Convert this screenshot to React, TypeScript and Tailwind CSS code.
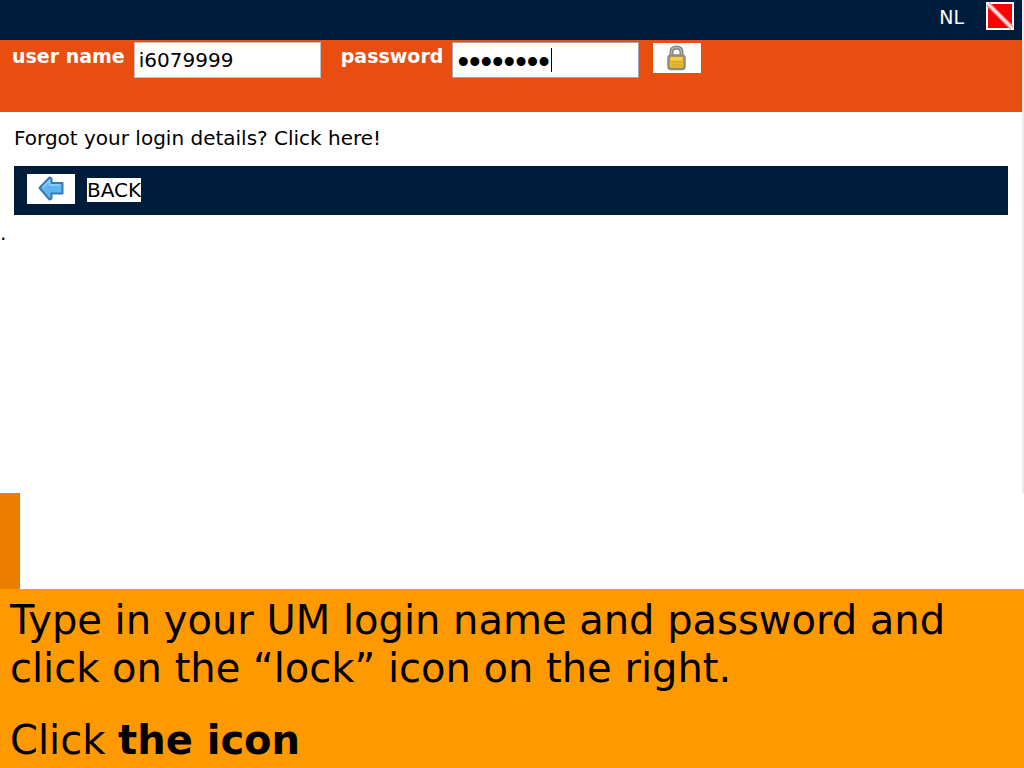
import { useState } from 'react';

function LockIcon() {
  return (
    <svg viewBox="0 0 24 26" className="h-[26px] w-6" aria-hidden="true">
      <path d="M6.500 12V7C6.500 4 8.500 2.500 11.500 2.500s5 1.500 5 4.500V12" fill="none" stroke="#7d8184" strokeWidth="4" />
      <path d="M6.500 12V7C6.500 4 8.500 2.500 11.500 2.500s5 1.500 5 4.500V12" fill="none" stroke="#adb2b5" strokeWidth="1.500" />
      <rect x="3.500" y="10.500" width="16" height="13.500" rx="2.500" fill="#e8bd2b" stroke="#908c82" strokeWidth="2.500" />
      <rect x="6" y="12.500" width="11" height="3" fill="#f5d24d" />
      <path d="M6.500 17h10M6.500 20h10" stroke="#cfa01c" strokeWidth="1" />
    </svg>
  );
}

function ArrowIcon() {
  return (
    <svg viewBox="0 0 26 26" className="size-[26px]" aria-hidden="true">
      <path
        d="M1.500 12 11.500 1.500l2 1v4.500H24.500v10.500H13.500v5l-2 1z"
        fill="#5eb4ec"
        stroke="#3a78ae"
        strokeWidth="2"
        strokeLinejoin="round"
      />
      <path d="M4.500 11.500 11.500 4.500v4.500h11" fill="none" stroke="#8ed1f8" strokeWidth="1.500" />
    </svg>
  );
}

function LogoIcon() {
  return (
    <svg viewBox="0 0 28 28" className="size-7" aria-hidden="true">
      <rect width="28" height="28" fill="#fff" />
      <rect x="2" y="2" width="24" height="24" fill="#fe0000" />
      <path d="M2 2 26 26" stroke="#ff7a7a" strokeWidth="5" />
      <path d="M2 2 26 26" stroke="#ffe4e4" strokeWidth="2.500" />
    </svg>
  );
}

export default function App() {
  const [userName, setUserName] = useState('i6079999');
  const [password, setPassword] = useState('password');

  return (
    <div className="flex min-h-screen flex-col bg-white font-['DejaVu_Sans',Verdana,sans-serif] text-black">
      <div className="flex-1 border-r-2 border-[#ebe8ee]">
        <header className="flex h-10 items-start justify-end gap-[22px] bg-[#001c3b] pt-0.5 pr-2">
          <a href="#nl" className="text-[19px] leading-[30px] text-white">NL</a>
          <LogoIcon />
        </header>

        <form
          className="flex h-[72px] items-start bg-[#e84e10] pt-0.5 pl-3"
          onSubmit={(e) => e.preventDefault()}
        >
          <label htmlFor="username" className="mr-[9px] text-[19px] leading-7 font-bold whitespace-nowrap text-white">
            user name
          </label>
          <input
            id="username"
            type="text"
            value={userName}
            onChange={(e) => setUserName(e.target.value)}
            className="mr-5 h-9 w-[187px] border border-[#c9bcc0] bg-white px-1 text-xl outline-none"
          />
          <label htmlFor="password" className="mr-[9px] text-[19px] leading-7 font-bold whitespace-nowrap text-white">
            password
          </label>
          <div className="relative mr-3.5">
            <input
              id="password"
              type="password"
              value={password}
              onChange={(e) => setPassword(e.target.value)}
              className="h-9 w-[187px] border border-[#a9a0b4] bg-white px-1 pt-1 font-['Liberation_Sans',Arial,sans-serif] text-[33px] caret-transparent outline-none"
            />
            <span className="absolute top-1.5 left-[99px] h-6 w-px bg-black" />
          </div>
          <button type="submit" aria-label="Log in" className="mt-px flex h-[30px] w-12 items-center justify-center bg-white">
            <LockIcon />
          </button>
        </form>

        <main className="px-3.5 pt-3">
          <a href="#forgot" className="block text-xl">Forgot your login details? Click here!</a>
          <div className="mt-3.5 flex h-[49px] items-start gap-3 bg-[#001c3b] pt-2 pl-[13px]">
            <button type="button" aria-label="Back" className="flex h-[30px] w-12 items-center justify-center bg-white">
              <ArrowIcon />
            </button>
            <a href="#back" className="mt-1 bg-white text-xl leading-6">BACK</a>
          </div>
        </main>
        <p className="mt-1 text-xl">.</p>
      </div>

      <div className="h-24 w-5 bg-[#eb7d00]" />

      <section className="bg-[#ff9900] px-2.5 pt-[7px] pb-1 text-[40px] leading-[48px]">
        <p className="mb-6">
          Type in your UM login name and password and click on the “lock” icon on the right.
        </p>
        <p>
          Click <strong className="font-bold">the icon</strong>
        </p>
      </section>
    </div>
  );
}
